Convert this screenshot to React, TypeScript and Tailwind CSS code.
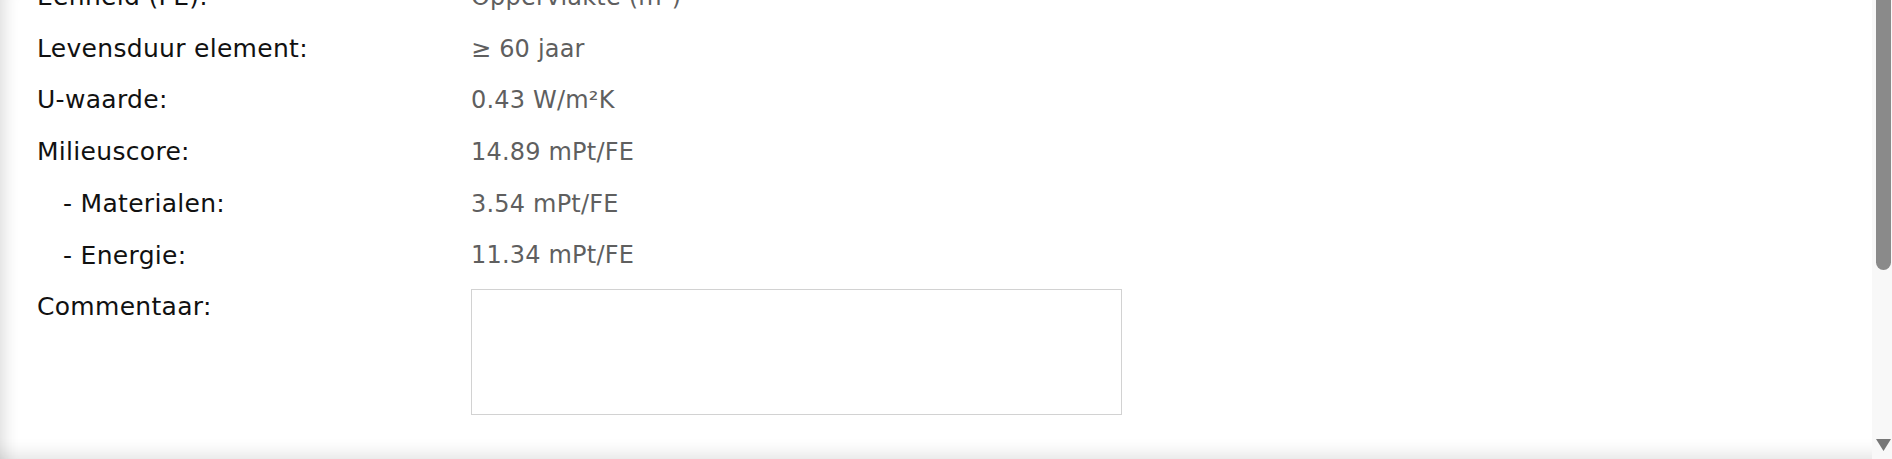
import React from "react";

const rows: [string, string, boolean][] = [
  ["Eenheid (FE):", "Oppervlakte (m²)", false],
  ["Levensduur element:", "≥ 60 jaar", false],
  ["U-waarde:", "0.43 W/m²K", false],
  ["Milieuscore:", "14.89 mPt/FE", false],
  ["- Materialen:", "3.54 mPt/FE", true],
  ["- Energie:", "11.34 mPt/FE", true],
];

export default function App() {
  return (
    <div
      className="relative flex h-[459px] w-[1892px] overflow-hidden bg-white shadow-[inset_20px_0_16px_-16px_rgba(0,0,0,0.14),inset_0_-22px_18px_-18px_rgba(0,0,0,0.12)]"
      style={{ fontFamily: '"DejaVu Sans", "Noto Sans", sans-serif' }}
    >
      <div className="flex-1 pl-[37px]">
        <div className="-mt-[29px] grid grid-cols-[434px_1fr]">
          {rows.map(([l, v, indent]) => (
            <React.Fragment key={l}>
              <div
                className={
                  indent
                    ? "flex h-[51.7px] items-center pl-[26px] text-[25px] tracking-[0.3px] text-[#111111]"
                    : "flex h-[51.7px] items-center text-[25px] tracking-[0.3px] text-[#111111]"
                }
              >
                {l}
              </div>
              <div className="flex h-[51.7px] items-center text-[24px] tracking-[0.2px] text-[#5f5f5f]">{v}</div>
            </React.Fragment>
          ))}
          <div className="flex h-[51.7px] items-center self-start text-[25px] tracking-[0.3px] text-[#111111]">
            Commentaar:
          </div>
          <div>
            <textarea className="mt-[7.5px] block h-[126px] w-[651px] resize-none border border-[#d2d2d2] bg-white outline-none" />
          </div>
        </div>
      </div>
      <div className="relative w-[20px] bg-[#f8f8f8]">
        <div className="ml-[4px] h-[270px] w-[15px] rounded-b-[8px] bg-[#8a8a8a]" />
        <svg className="absolute left-[4px] top-[439px]" width="15" height="12" viewBox="0 0 15 12">
          <polygon points="0,0 15,0 7.5,12" fill="#777777" />
        </svg>
      </div>
    </div>
  );
}
